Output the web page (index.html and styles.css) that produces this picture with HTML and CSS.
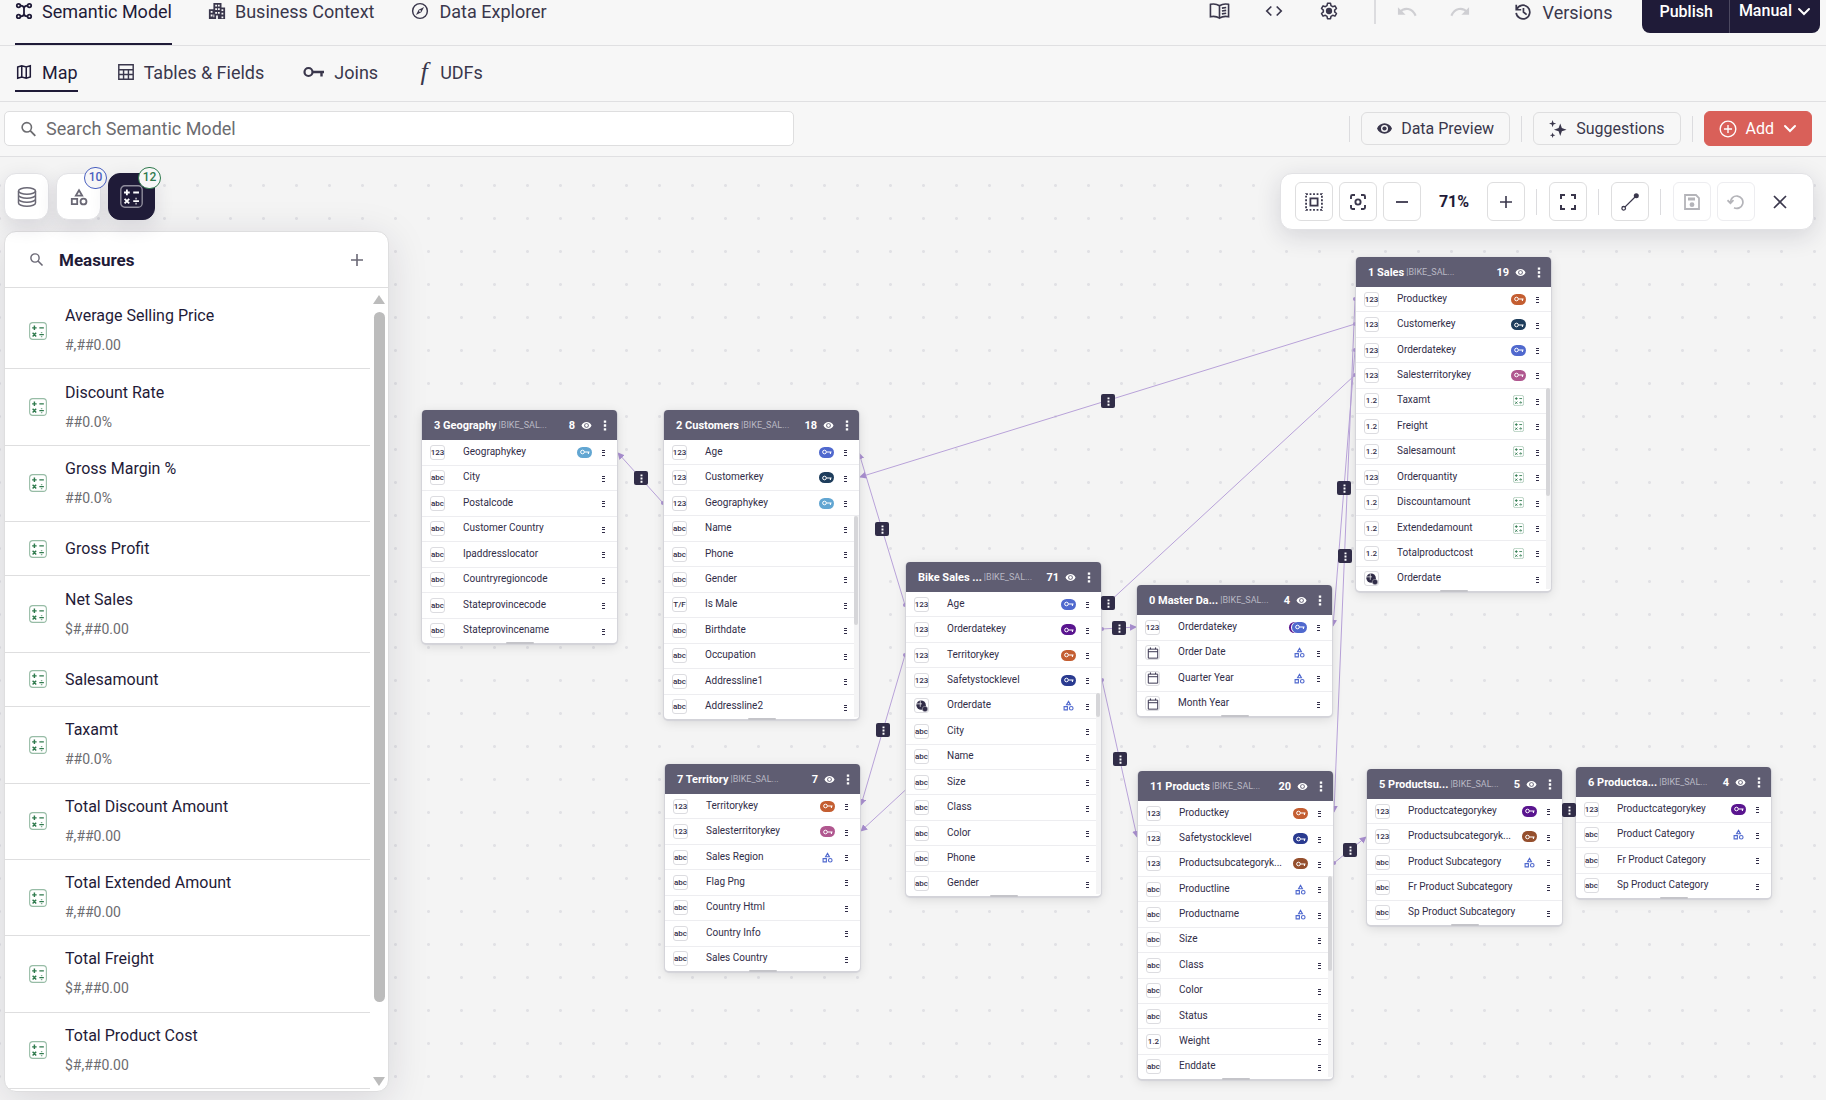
FILE: index.html
```html
<!DOCTYPE html>
<html lang="en">
<head>
    <meta charset="UTF-8">
    <meta name="viewport" content="width=device-width, initial-scale=1.0">
    <title>Semantic Model</title>
    <link rel="stylesheet" href="styles.css">
</head>
<body>
    <svg class="sprite" aria-hidden="true">
        <symbol id="i-model" viewBox="0 0 20 20"><g fill="none" stroke="currentColor" stroke-width="2"><circle cx="4" cy="4" r="2"/><circle cx="16" cy="4" r="2"/><circle cx="4" cy="16" r="2"/><circle cx="16" cy="16" r="2"/><path d="M6 4c2 0 4 1 4 3v6c0 2-2 3-4 3M14 4c-2 0-4 1-4 3M10 13c0 2 2 3 4 3"/></g></symbol>
        <symbol id="i-building" viewBox="0 0 20 20"><path fill="currentColor" fill-rule="evenodd" d="M6 1h9v5h4v13h-8v-4H9v4H1V8h5zM8 3v2h2V3zm3 0v2h2V3zM8 7v2h2V7zm3 0v2h2V7zM3 10v2h2v-2zm5 1v2h2v-2zm3 0v2h2v-2zm4-3v2h2V8zm0 4v2h2v-2zM3 14v2h2v-2zm12 2v2h2v-2zm-9-2v3h1v-3z"/></symbol>
        <symbol id="i-compass" viewBox="0 0 20 20"><circle cx="10" cy="10" r="8.2" fill="none" stroke="currentColor" stroke-width="1.6"/><path fill="currentColor" fill-rule="evenodd" d="M14.5 5.5l-3 6-6 3 3-6zM10 9a1 1 0 100 2 1 1 0 000-2z"/></symbol>
        <symbol id="i-map" viewBox="0 0 20 20"><path fill="none" stroke="currentColor" stroke-width="1.7" d="M3 4.5L7.5 3l5 1.500L17 3v12.500L12.500 17l-5-1.500L3 17zM7.500 3v12.500M12.500 4.500V17"/></symbol>
        <symbol id="i-table" viewBox="0 0 20 20"><path fill="none" stroke="currentColor" stroke-width="1.6" d="M2 2h16v16H2zM2 7.500h16M2 12.700h16M7.300 7.500V18M12.700 7.500V18"/></symbol>
        <symbol id="i-key" viewBox="0 0 22 12"><circle cx="5.500" cy="6" r="4" fill="none" stroke="currentColor" stroke-width="2.200"/><path fill="none" stroke="currentColor" stroke-width="2.400" d="M9.500 6H21M18.500 6v4.500"/></symbol>
        <symbol id="i-book" viewBox="0 0 22 18"><path fill="none" stroke="currentColor" stroke-width="1.700" d="M11 3.500C8 1.500 5 1.200 1.500 2v13c3.500-.8 6.500-.5 9.500 1.500 3-2 6-2.300 9.500-1.500V2C17 1.200 14 1.500 11 3.500zM11 3.500v13M13.500 6l4.500-.7M13.500 9l4.500-.7M13.500 12l4.500-.7"/></symbol>
        <symbol id="i-code" viewBox="0 0 20 14"><path fill="none" stroke="currentColor" stroke-width="1.900" d="M7 2L2 7l5 5M13 2l5 5-5 5"/></symbol>
        <symbol id="i-gear" viewBox="0 0 20 20"><path fill="none" stroke="currentColor" stroke-width="1.700" stroke-linejoin="round" d="M8.300 1.500h3.400l.5 2.600 1.900 1.100 2.500-.9 1.700 2.900-2 1.800v2l2 1.800-1.700 2.900-2.500-.9-1.900 1.100-.5 2.600H8.300l-.5-2.600-1.900-1.100-2.500.9-1.700-2.900 2-1.800V9l-2-1.800 1.700-2.900 2.500.9 1.900-1.100z"/><circle cx="10" cy="10" r="3.500" fill="currentColor"/></symbol>
        <symbol id="i-undo" viewBox="0 0 22 14"><path fill="none" stroke="currentColor" stroke-width="2.200" d="M2.500 8.500C8 2.500 16 4 19.500 12"/><path fill="currentColor" d="M1 3v8h8z"/></symbol>
        <symbol id="i-redo" viewBox="0 0 22 14"><path fill="none" stroke="currentColor" stroke-width="2.200" d="M19.500 8.500C14 2.500 6 4 2.500 12"/><path fill="currentColor" d="M21 3v8h-8z"/></symbol>
        <symbol id="i-history" viewBox="0 0 20 20"><path fill="none" stroke="currentColor" stroke-width="1.900" d="M3 7a7.600 7.600 0 11-.6 4M2.500 2v5.500H8M10.500 5.500V10l3.500 3"/></symbol>
        <symbol id="i-chevron" viewBox="0 0 14 10"><path fill="none" stroke="currentColor" stroke-width="2" stroke-linecap="round" d="M2 2l5 5 5-5"/></symbol>
        <symbol id="i-search" viewBox="0 0 20 20"><circle cx="8" cy="8" r="5.500" fill="none" stroke="currentColor" stroke-width="1.900"/><path stroke="currentColor" stroke-width="2.200" d="M12 12l6 6"/></symbol>
        <symbol id="i-eye" viewBox="0 0 20 14"><path fill="currentColor" fill-rule="evenodd" d="M10 0c4.500 0 8.300 2.800 10 7-1.700 4.200-5.500 7-10 7S1.700 11.200 0 7c1.700-4.200 5.500-7 10-7zm0 2.300a4.700 4.700 0 100 9.400 4.700 4.700 0 000-9.400z"/><circle cx="10" cy="7" r="2.800" fill="currentColor"/></symbol>
        <symbol id="i-spark" viewBox="0 0 20 20"><path fill="currentColor" d="M12.500 4l1.800 5 5.200 1.800-5.200 1.800-1.800 5.200-1.800-5.200-5.200-1.800L10.700 9zM4 0l1 3 3 1-3 1-1 3-1-3-3-1 3-1zM4 14l.8 2.200L7 17l-2.200.8L4 20l-.8-2.200L1 17l2.200-.8z"/></symbol>
        <symbol id="i-plus-circle" viewBox="0 0 20 20"><g fill="none" stroke="currentColor" stroke-width="1.500"><circle cx="10" cy="10" r="8.700"/><path d="M10 5.500v9M5.500 10h9"/></g></symbol>
        <symbol id="i-db" viewBox="0 0 20 20"><g fill="none" stroke="currentColor" stroke-width="1.500"><ellipse cx="10" cy="4" rx="8.500" ry="3.200"/><path d="M1.500 4v12c0 1.800 3.800 3.200 8.500 3.200s8.500-1.400 8.500-3.200V4M1.500 8c0 1.800 3.800 3.200 8.500 3.200s8.500-1.400 8.500-3.200M1.500 12c0 1.800 3.800 3.200 8.500 3.200s8.500-1.400 8.500-3.200"/></g></symbol>
        <symbol id="i-shapes" viewBox="0 0 20 20"><path fill="none" stroke="currentColor" stroke-width="2" d="M10 2.500l3.500 6h-7zM2 12h6v6H2z"/><circle cx="15" cy="15" r="3.300" fill="none" stroke="currentColor" stroke-width="2"/></symbol>
        <symbol id="i-calc" viewBox="0 0 20 20"><rect x=".7" y=".7" width="18.600" height="18.600" rx="3.500" fill="none" stroke="currentColor" stroke-width="1.200" opacity=".5"/><path fill="none" stroke="currentColor" stroke-width="1.600" d="M3.500 6.500h5M6 4v5M11.500 6.500h5M4 12l4 4M8 12l-4 4M11.500 14h5"/><path fill="currentColor" opacity=".6" d="M13.200 11h1.600v1.500h-1.600zM13.200 15.500h1.600V17h-1.600z"/></symbol>
        <symbol id="i-plus" viewBox="0 0 14 14"><path stroke="currentColor" stroke-width="1.600" d="M7 1v12M1 7h12"/></symbol>
        <symbol id="i-minus" viewBox="0 0 14 14"><path stroke="currentColor" stroke-width="1.800" d="M1 7h12"/></symbol>
        <symbol id="i-select" viewBox="0 0 20 20"><rect x="1.200" y="1.200" width="17.600" height="17.600" fill="none" stroke="currentColor" stroke-width="2" stroke-dasharray="2 1.910"/><rect x="6" y="6" width="8" height="8" fill="none" stroke="currentColor" stroke-width="2"/></symbol>
        <symbol id="i-focus" viewBox="0 0 18 18"><path fill="none" stroke="currentColor" stroke-width="1.900" d="M2 6V3.500Q2 2 3.500 2H6M12 2h2.500Q16 2 16 3.500V6M16 12v2.500q0 1.500-1.500 1.500H12M6 16H3.500Q2 16 2 14.500V12"/><circle cx="9" cy="9" r="2.600" fill="none" stroke="currentColor" stroke-width="1.900"/></symbol>
        <symbol id="i-full" viewBox="0 0 18 18"><path fill="none" stroke="currentColor" stroke-width="2" d="M2 6V2h4M12 2h4v4M16 12v4h-4M6 16H2v-4"/></symbol>
        <symbol id="i-line" viewBox="0 0 20 20"><path stroke="currentColor" stroke-width="1.400" d="M4 16L17 3"/><circle cx="17" cy="3" r="2.800" fill="currentColor"/><circle cx="3" cy="17" r="2" fill="#fff" stroke="currentColor" stroke-width="1.400"/></symbol>
        <symbol id="i-save" viewBox="0 0 18 18"><path fill="none" stroke="currentColor" stroke-width="1.800" d="M2 2h11l3 3v11H2z"/><path fill="currentColor" d="M5 4.500h7v3H5z"/><circle cx="9" cy="11.700" r="2.400" fill="currentColor"/></symbol>
        <symbol id="i-reset" viewBox="0 0 18 18"><path fill="none" stroke="currentColor" stroke-width="1.700" d="M3.500 9.500a6.200 6.200 0 113.500 5.300M.5 7.200l3 3 3-3"/></symbol>
        <symbol id="i-close" viewBox="0 0 14 14"><path stroke="currentColor" stroke-width="1.700" d="M1 1l12 12M13 1L1 13"/></symbol>
        <symbol id="i-kebab" viewBox="0 0 4 12"><path fill="currentColor" d="M.7.500h2.600v2.600H.7zM.7 4.700h2.600v2.600H.7zM.7 8.900h2.600v2.600H.7z"/></symbol>
        <symbol id="i-dots" viewBox="0 0 3 6"><path fill="currentColor" shape-rendering="crispEdges" d="M0 0h3v1H0zM0 2h3v1H0zM0 5h3v1H0z"/></symbol>
        <symbol id="i-calendar" viewBox="0 0 14 14"><path fill="none" stroke="currentColor" stroke-width="1.100" d="M1.500 2.500h11v10.500h-11zM1.500 5.500h11M4 .5v2M10 .5v2"/></symbol>
        <symbol id="i-globe" viewBox="0 0 14 14"><circle cx="6" cy="6" r="5.500" fill="currentColor"/><path stroke="#fff" fill="none" stroke-width=".8" d="M1 4.500h6M5 1v7"/><circle cx="10.500" cy="10.500" r="3.200" fill="currentColor" stroke="#fff" stroke-width=".4"/></symbol>
    </svg>

    <header class="topbar">
        <nav class="tabs">
            <a href="#model" class="tab active"><svg><use href="#i-model"/></svg>Semantic Model</a>
            <a href="#context" class="tab"><svg><use href="#i-building"/></svg>Business Context</a>
            <a href="#explorer" class="tab"><svg class="wide"><use href="#i-compass"/></svg>Data Explorer</a>
        </nav>
        <div class="top-actions">
            <button class="icon-btn" aria-label="Docs"><svg class="wide"><use href="#i-book"/></svg></button>
            <button class="icon-btn" aria-label="Code"><svg><use href="#i-code"/></svg></button>
            <button class="icon-btn" aria-label="Settings"><svg><use href="#i-gear"/></svg></button>
            <span class="divider"></span>
            <button class="icon-btn" aria-label="Undo" disabled><svg class="wide"><use href="#i-undo"/></svg></button>
            <button class="icon-btn" aria-label="Redo" disabled><svg class="wide"><use href="#i-redo"/></svg></button>
            <button class="versions"><svg><use href="#i-history"/></svg>Versions</button>
            <div class="publish">
                <button>Publish</button>
                <button class="mode">Manual<svg><use href="#i-chevron"/></svg></button>
            </div>
        </div>
    </header>

    <nav class="subnav">
        <a href="#map" class="subtab active"><svg><use href="#i-map"/></svg>Map</a>
        <a href="#tables" class="subtab"><svg><use href="#i-table"/></svg>Tables &amp; Fields</a>
        <a href="#joins" class="subtab"><svg class="key"><use href="#i-key"/></svg>Joins</a>
        <a href="#udfs" class="subtab"><i class="fn">f</i>UDFs</a>
    </nav>

    <div class="searchbar">
        <label class="search">
            <svg><use href="#i-search"/></svg>
            <input type="text" placeholder="Search Semantic Model" aria-label="Search Semantic Model">
        </label>
        <div class="search-actions">
            <span class="divider"></span>
            <button class="outline"><svg class="eye"><use href="#i-eye"/></svg>Data Preview</button>
            <span class="divider"></span>
            <button class="outline"><svg><use href="#i-spark"/></svg>Suggestions</button>
            <span class="divider"></span>
            <button class="add"><svg><use href="#i-plus-circle"/></svg>Add<svg class="chev"><use href="#i-chevron"/></svg></button>
        </div>
    </div>

    <main class="canvas">
        <svg class="edges" id="edges">
            <defs>
                <marker id="arrow" viewBox="0 0 8 8" refX="7" refY="4" markerWidth="7" markerHeight="7" markerUnits="userSpaceOnUse" orient="auto"><path d="M0 0l8 4-8 4z"/></marker>
                <marker id="dot" viewBox="0 0 6 6" refX="3" refY="3" markerWidth="4" markerHeight="4" markerUnits="userSpaceOnUse"><circle cx="3" cy="3" r="3"/></marker>
            </defs>
        </svg>
        <div id="nodes"></div>

        <div class="side">
            <div class="side-tabs">
                <button class="side-tab" aria-label="Tables"><svg><use href="#i-db"/></svg></button>
                <button class="side-tab dims" aria-label="Dimensions"><svg><use href="#i-shapes"/></svg><span class="badge blue">10</span></button>
                <button class="side-tab active" aria-label="Measures"><svg><use href="#i-calc"/></svg><span class="badge green">12</span></button>
            </div>
            <section class="panel">
                <div class="panel-head">
                    <svg><use href="#i-search"/></svg>
                    <h2>Measures</h2>
                    <button aria-label="Add measure"><svg><use href="#i-plus"/></svg></button>
                </div>
                <div class="panel-body">
                    <ul class="measures" id="measures"></ul>
                    <div class="scroll"><span class="up"></span><span class="thumb"></span><span class="down"></span></div>
                </div>
            </section>
        </div>

        <div class="tools">
            <button aria-label="Select all"><svg><use href="#i-select"/></svg></button>
            <button aria-label="Center"><svg><use href="#i-focus"/></svg></button>
            <button aria-label="Zoom out"><svg class="small"><use href="#i-minus"/></svg></button>
            <span class="zoom">71%</span>
            <button aria-label="Zoom in"><svg class="small"><use href="#i-plus"/></svg></button>
            <span class="divider"></span>
            <button aria-label="Full screen"><svg><use href="#i-full"/></svg></button>
            <span class="divider"></span>
            <button aria-label="Line style"><svg><use href="#i-line"/></svg></button>
            <span class="divider"></span>
            <button aria-label="Save" disabled><svg><use href="#i-save"/></svg></button>
            <button aria-label="Reset" disabled><svg><use href="#i-reset"/></svg></button>
            <button class="plain" aria-label="Close"><svg class="small"><use href="#i-close"/></svg></button>
        </div>
    </main>

    <script src="script.js"></script>
</body>
</html>
```
FILE: styles.css
```css
* {
    box-sizing: border-box;
}

body {
    margin: 0;
    height: 100vh;
    display: flex;
    flex-direction: column;
    overflow: hidden;
    background-color: #f7f7f7;
    color: #3a374c;
    font-family: Roboto, "Liberation Sans", sans-serif;
    font-size: 18px;
}

button {
    font: inherit;
    color: inherit;
    background: none;
    border: none;
    padding: 0;
    cursor: pointer;
}

a {
    color: inherit;
    text-decoration: none;
}

svg {
    width: 18px;
    height: 18px;
    flex: none;
}

.sprite {
    display: none;
}

.divider {
    width: 1px;
    height: 26px;
    background-color: #dcdcdf;
}

/* top bar */
.topbar {
    display: flex;
    justify-content: space-between;
    height: 46px;
    padding: 0 6px 0 15px;
    border-bottom: 1px solid #e0e0e2;
}

.tabs {
    display: flex;
    gap: 36px;
}

.tab {
    display: flex;
    align-items: flex-start;
    gap: 9px;
    line-height: 24px;
    height: 45px;
}

.tab svg {
    margin-top: 2px;
}

.tab svg.wide {
    width: 20px;
}

.tab.active,
.subtab.active {
    color: #1f1b38;
    border-bottom: 2px solid #1f1b38;
}

.top-actions {
    display: flex;
    align-items: flex-start;
    height: 33px;
}

.icon-btn {
    display: flex;
    align-items: center;
    justify-content: center;
    width: 55px;
    height: 22px;
}

.icon-btn:disabled {
    color: #cfcfd3;
    width: 52px;
}

.icon-btn svg.wide {
    width: 21px;
}

.top-actions .divider {
    height: 24px;
    width: 2px;
    margin: 0 6px 0 17px;
}

.versions {
    display: flex;
    align-items: center;
    gap: 11px;
    height: 24px;
    margin: 0 30px 0 28px;
}

.publish {
    display: flex;
    height: 33px;
    background-color: #1f1b38;
    border-radius: 0 0 8px 8px;
    color: #fff;
    font-size: 16px;
    font-weight: 500;
    line-height: 24px;
}

.publish button {
    display: flex;
    padding: 0 16px 0 17px;
}

.publish .mode {
    gap: 5px;
    padding: 0 9px;
    border-left: 1px solid #4b4860;
    line-height: 22px;
}

.mode svg {
    width: 14px;
    height: 24px;
}

/* sub navigation */
.subnav {
    display: flex;
    gap: 39px;
    height: 56px;
    padding: 8px 15px 9px;
    border-bottom: 1px solid #e0e0e2;
}

.subtab {
    display: flex;
    align-items: center;
    gap: 9px;
    height: 38px;
    border-bottom: 2px solid transparent;
}

.subtab .key {
    width: 22px;
    height: 12px;
}

.fn {
    font-family: "Liberation Serif", serif;
    font-size: 26px;
    line-height: 26px;
    width: 14px;
    text-align: center;
}

/* search row */
.searchbar {
    display: flex;
    align-items: center;
    justify-content: space-between;
    height: 55px;
    padding: 0 14px 1px 4px;
    border-bottom: 1px solid #e0e0e2;
}

.search {
    display: flex;
    align-items: center;
    gap: 9px;
    flex: 0 0 790px;
    height: 35px;
    padding: 0 15px;
    background-color: #fff;
    border: 1px solid #dededf;
    border-radius: 5px;
    color: #6c6c70;
}

.search svg {
    width: 17px;
}

.search input {
    flex: 1;
    font: inherit;
    color: inherit;
    border: none;
    outline: none;
    padding: 0;
    background: none;
}

.search input::placeholder {
    color: #6c6c70;
    opacity: 1;
}

.search-actions {
    display: flex;
    align-items: center;
    gap: 11px;
    font-size: 16px;
}

.outline,
.add {
    display: flex;
    align-items: center;
    gap: 9px;
    height: 33px;
    padding: 0 15px;
    border: 1px solid #dededf;
    border-radius: 6px;
}

.outline .eye {
    width: 15px;
    height: 11px;
}

.add {
    height: 35px;
    padding: 0 14px;
    background-color: #d96059;
    border-color: #d96059;
    color: #fff;
}

.add .chev {
    width: 14px;
    height: 10px;
}

/* canvas */
.canvas {
    position: relative;
    flex: 1;
    min-height: 0;
    background-color: #f4f4f4;
    background-image: radial-gradient(circle, #e1e1e5 1px, transparent 2px);
    background-size: 33px 33px;
    background-position: 16px 12px;
}

.edges {
    position: absolute;
    width: 100%;
    height: 100%;
}

.edges line {
    stroke: #b8a2d9;
    stroke-width: 1;
}

.edges marker {
    fill: #a98fd0;
}

.joint {
    position: absolute;
    display: flex;
    align-items: center;
    justify-content: center;
    width: 14px;
    height: 14px;
    margin: -7px;
    background-color: #312d48;
    border-radius: 2px;
    color: #fff;
}

.joint svg {
    width: 3px;
    height: 9px;
}

/* table nodes */
.node {
    position: absolute;
    display: flex;
    flex-direction: column;
    width: 195px;
    background-color: #fff;
    border-radius: 4px;
    box-shadow: 0 1px 1px 1px #d3d3d9, 0 3px 12px rgba(0, 0, 0, 0.12);
}

.node-head {
    display: flex;
    align-items: center;
    flex: none;
    height: 30px;
    padding: 0 10px 0 12px;
    background-color: #5f5d72;
    border-radius: 4px 4px 0 0;
    color: #fff;
    font-size: 11px;
}

.node-head h3 {
    margin: 0;
    font-size: 11px;
}

.node-head .source {
    flex: 1;
    margin-left: 2px;
    color: #b9b8c4;
    font-size: 9px;
}

.node-head .count {
    font-weight: 700;
}

.node-head .eye {
    width: 11px;
    height: 7px;
    margin: 0 11px 0 6px;
}

.node-head button,
.field button {
    display: flex;
}

.node-head button svg {
    width: 4px;
    height: 11px;
}

.fields {
    display: flex;
    flex-direction: column;
    flex: 1;
    margin: 0;
    padding: 0;
    list-style: none;
}

.field {
    display: flex;
    flex: 1;
    align-items: center;
    padding: 0 12px 0 8px;
    border-bottom: 1px solid #ededf0;
    color: #312d48;
    font-size: 10px;
}

.field:last-child {
    border-bottom: none;
}

.type {
    display: flex;
    align-items: center;
    justify-content: center;
    width: 15px;
    height: 15px;
    margin-right: 18px;
    border: 1px solid #dcdce0;
    border-radius: 3px;
    font-size: 8px;
    font-weight: 500;
}

.type svg {
    width: 12px;
    height: 12px;
}

.name {
    flex: 1;
    padding-bottom: 2px;
    white-space: nowrap;
}

.pill {
    display: flex;
    align-items: center;
    justify-content: center;
    width: 15px;
    height: 11px;
    margin-right: 10px;
    border-radius: 6px;
    color: #fff;
}

.pill svg {
    width: 10px;
    height: 6px;
}

.sky { background-color: #62a6d2; }
.blue-key { background-color: #5069ce; }
.teal { background-color: #1e3d5c; }
.orange { background-color: #c45e31; }
.pink { background-color: #b0578f; }
.purple { background-color: #5a158f; }
.navy { background-color: #2a3b90; }
.brown { background-color: #954f2d; }

.double {
    box-shadow: -1px 0 0 #fff, -3px 0 0 #5a158f;
}

.mark {
    width: 11px;
    height: 11px;
    margin-right: 12px;
}

.mark.dim { color: #5069ce; }
.mark.calc { color: #2f7a4d; }

.field button svg {
    width: 3px;
    height: 6px;
    margin-top: 2px;
}

.track {
    position: absolute;
    right: 0;
    bottom: 2px;
    width: 5px;
    background-color: #f4f4f5;
}

.track span {
    display: block;
    width: 4px;
    background-color: #d6d6d9;
    border-radius: 2px;
}

.handle {
    position: absolute;
    left: 50%;
    bottom: -1px;
    width: 28px;
    height: 2px;
    margin-left: -14px;
    background-color: #c4c4c9;
    border-radius: 1px;
}

/* left side */
.side {
    position: absolute;
    top: 16px;
    bottom: 8px;
    left: 4px;
    width: 385px;
    display: flex;
    flex-direction: column;
    gap: 11px;
}

.side-tabs {
    display: flex;
    gap: 7px;
}

.side-tab {
    position: relative;
    display: flex;
    align-items: center;
    justify-content: center;
    width: 45px;
    height: 47px;
    background-color: #fff;
    border: 1px solid #e2e2e5;
    border-radius: 12px;
    box-shadow: 0 6px 20px rgba(30, 27, 56, 0.12);
    color: #6a6875;
}

.side-tab svg {
    width: 20px;
    height: 22px;
}

.side-tab.dims svg {
    width: 18px;
    height: 18px;
}

.side-tab.active {
    width: 47px;
    background-color: #1f1b38;
    border-color: #1f1b38;
    color: #fff;
}

.side-tab.active svg {
    width: 23px;
    height: 23px;
}

.badge {
    position: absolute;
    top: -7px;
    right: -7px;
    width: 23px;
    height: 22px;
    background-color: #f7f7f7;
    border: 1px solid;
    border-radius: 11px;
    font-size: 12px;
    font-weight: 500;
    line-height: 19px;
}

.blue { color: #4a60c0; }
.green { color: #2f7a4d; }

.panel {
    display: flex;
    flex-direction: column;
    flex: 1;
    min-height: 0;
    background-color: #fff;
    border: 1px solid #dededf;
    border-radius: 12px;
    box-shadow: 0 8px 40px rgba(30, 27, 56, 0.13);
    overflow: hidden;
}

.panel-head {
    display: flex;
    align-items: center;
    flex: none;
    gap: 15px;
    height: 56px;
    padding: 0 24px;
    border-bottom: 1px solid #dededf;
    color: #6a6875;
}

.panel-head svg {
    width: 15px;
    height: 15px;
}

.panel-head h2 {
    flex: 1;
    margin: 0;
    color: #1f1b38;
    font-size: 17px;
    font-weight: 700;
}

.panel-head button {
    display: flex;
}

.panel-head button svg {
    width: 14px;
    height: 14px;
}

.panel-body {
    display: flex;
    flex: 1;
    min-height: 0;
}

.measures {
    display: flex;
    flex-direction: column;
    flex: 1;
    margin: 0;
    padding: 5px 0 2px;
    list-style: none;
}

.measure {
    display: flex;
    align-items: center;
    flex: 1 0 auto;
    gap: 18px;
    padding: 4px 0 4px 24px;
    border-bottom: 1px solid #dededf;
}

.measure svg {
    color: #2f7a4d;
}

.measure h4 {
    margin: 0;
    padding: 4px 0;
    color: #1f1b38;
    font-size: 16px;
    font-weight: 400;
    line-height: 29px;
}

.measure h4:only-child {
    padding: 8px 0;
}

.measure p {
    margin: 0 0 8px;
    color: #6c6c70;
    font-size: 14px;
    line-height: 22px;
}

.scroll {
    display: flex;
    flex-direction: column;
    align-items: center;
    gap: 8px;
    width: 18px;
    padding: 6px 0 5px;
}

.thumb {
    flex: 0 1 690px;
    width: 11px;
    background-color: #bcbcbc;
    border-radius: 6px;
}

.up,
.down {
    border: 6px solid transparent;
    border-bottom: 9px solid #bcbcbc;
    border-top: none;
    margin-top: 1px;
}

.down {
    border-top: 9px solid #bcbcbc;
    border-bottom: none;
    margin-top: auto;
}

/* canvas tools */
.tools {
    position: absolute;
    top: 16px;
    right: 12px;
    display: flex;
    align-items: center;
    gap: 6px;
    height: 57px;
    padding: 0 14px;
    background-color: #fff;
    border: 1px solid #e2e2e5;
    border-radius: 12px;
    box-shadow: 0 6px 24px rgba(30, 27, 56, 0.14);
}

.tools button {
    display: flex;
    align-items: center;
    justify-content: center;
    width: 38px;
    height: 39px;
    border: 1px solid #dededf;
    border-radius: 6px;
}

.tools button:disabled {
    color: #b4b4b9;
    border-color: #ededf0;
}

.tools .plain {
    border: none;
}

.tools .small {
    width: 14px;
    height: 14px;
}

.tools .divider {
    margin: 0 6px 0 5px;
}

.zoom {
    width: 54px;
    color: #1f1b38;
    font-size: 16px;
    font-weight: 700;
    text-align: center;
}
```
FILE: script.js
```js
const measures = [
    ['Average Selling Price', '#,##0.00'],
    ['Discount Rate', '##0.0%'],
    ['Gross Margin %', '##0.0%'],
    ['Gross Profit'],
    ['Net Sales', '$#,##0.00'],
    ['Salesamount'],
    ['Taxamt', '##0.0%'],
    ['Total Discount Amount', '#,##0.00'],
    ['Total Extended Amount', '#,##0.00'],
    ['Total Freight', '$#,##0.00'],
    ['Total Product Cost', '$#,##0.00']
];

// field: [type, name, mark]
const nodes = [
    { title: '3 Geography', count: 8, x: 422, y: 253, h: 233, fields: [
        ['123', 'Geographykey', 'sky'], ['abc', 'City'], ['abc', 'Postalcode'], ['abc', 'Customer Country'],
        ['abc', 'Ipaddresslocator'], ['abc', 'Countryregioncode'], ['abc', 'Stateprovincecode'], ['abc', 'Stateprovincename']
    ] },
    { title: '2 Customers', count: 18, x: 664, y: 253, h: 309, scroll: [106, 109], fields: [
        ['123', 'Age', 'blue-key'], ['123', 'Customerkey', 'teal'], ['123', 'Geographykey', 'sky'], ['abc', 'Name'],
        ['abc', 'Phone'], ['abc', 'Gender'], ['T/F', 'Is Male'], ['abc', 'Birthdate'], ['abc', 'Occupation'],
        ['abc', 'Addressline1'], ['abc', 'Addressline2']
    ] },
    { title: '7 Territory', count: 7, x: 665, y: 607, h: 207, fields: [
        ['123', 'Territorykey', 'orange'], ['123', 'Salesterritorykey', 'pink'], ['abc', 'Sales Region', 'dim'],
        ['abc', 'Flag Png'], ['abc', 'Country Html'], ['abc', 'Country Info'], ['abc', 'Sales Country']
    ] },
    { title: 'Bike Sales ...', count: 71, x: 906, y: 405, h: 334, scroll: [131, 24], fields: [
        ['123', 'Age', 'blue-key'], ['123', 'Orderdatekey', 'purple'], ['123', 'Territorykey', 'orange'],
        ['123', 'Safetystocklevel', 'navy'], ['globe', 'Orderdate', 'dim'], ['abc', 'City'], ['abc', 'Name'],
        ['abc', 'Size'], ['abc', 'Class'], ['abc', 'Color'], ['abc', 'Phone'], ['abc', 'Gender']
    ] },
    { title: '0 Master Da...', count: 4, x: 1137, y: 428, h: 131, fields: [
        ['123', 'Orderdatekey', 'blue-key double'], ['calendar', 'Order Date', 'dim'],
        ['calendar', 'Quarter Year', 'dim'], ['calendar', 'Month Year']
    ] },
    { title: '11 Products', count: 20, x: 1138, y: 614, h: 308, scroll: [105, 95], fields: [
        ['123', 'Productkey', 'orange'], ['123', 'Safetystocklevel', 'navy'], ['123', 'Productsubcategoryk...', 'brown'],
        ['abc', 'Productline', 'dim'], ['abc', 'Productname', 'dim'], ['abc', 'Size'], ['abc', 'Class'],
        ['abc', 'Color'], ['abc', 'Status'], ['1.2', 'Weight'], ['abc', 'Enddate']
    ] },
    { title: '1 Sales', count: 19, x: 1356, y: 100, h: 334, scroll: [131, 108], fields: [
        ['123', 'Productkey', 'orange'], ['123', 'Customerkey', 'teal'], ['123', 'Orderdatekey', 'blue-key'],
        ['123', 'Salesterritorykey', 'pink'], ['1.2', 'Taxamt', 'calc'], ['1.2', 'Freight', 'calc'],
        ['1.2', 'Salesamount', 'calc'], ['123', 'Orderquantity', 'calc'], ['1.2', 'Discountamount', 'calc'],
        ['1.2', 'Extendedamount', 'calc'], ['1.2', 'Totalproductcost', 'calc'], ['globe', 'Orderdate']
    ] },
    { title: '5 Productsu...', count: 5, x: 1367, y: 612, h: 156, fields: [
        ['123', 'Productcategorykey', 'purple'], ['123', 'Productsubcategoryk...', 'brown'],
        ['abc', 'Product Subcategory', 'dim'], ['abc', 'Fr Product Subcategory'], ['abc', 'Sp Product Subcategory']
    ] },
    { title: '6 Productca...', count: 4, x: 1576, y: 610, h: 131, fields: [
        ['123', 'Productcategorykey', 'purple'], ['abc', 'Product Category', 'dim'],
        ['abc', 'Fr Product Category'], ['abc', 'Sp Product Category']
    ] }
];

// join: [x1, y1, x2, y2], arrow at the second point
const joins = [
    [663, 346, 618, 296],
    [905, 448, 859, 296],
    [1355, 167, 860, 320],
    [1355, 218, 861, 674],
    [905, 498, 861, 648],
    [1102, 472, 1136, 470],
    [1102, 523, 1137, 680],
    [1355, 193, 1333, 469],
    [1355, 142, 1334, 655],
    [1334, 706, 1366, 680],
    [1562, 653, 1576, 653]
];

function icon(id, cls) {
    return `<svg class="${cls || ''}"><use href="#i-${id}"/></svg>`;
}

function renderMark(mark) {
    if (!mark) return '';
    if (mark === 'dim') return icon('shapes', 'mark dim');
    if (mark === 'calc') return icon('calc', 'mark calc');
    return `<span class="pill ${mark}">${icon('key')}</span>`;
}

function renderField([type, name, mark]) {
    const label = type === 'globe' || type === 'calendar' ? icon(type) : type;
    return `<li class="field">
        <span class="type">${label}</span>
        <span class="name">${name}</span>
        ${renderMark(mark)}
        <button aria-label="Field menu">${icon('dots')}</button>
    </li>`;
}

function renderNode(n) {
    const track = n.scroll
        ? `<div class="track" style="top:${n.scroll[0]}px"><span style="height:${n.scroll[1]}px"></span></div>`
        : '';
    return `<article class="node" style="left:${n.x}px;top:${n.y}px;height:${n.h}px">
        <div class="node-head">
            <h3>${n.title}</h3>
            <span class="source">|BIKE_SAL...</span>
            <span class="count">${n.count}</span>
            ${icon('eye', 'eye')}
            <button aria-label="Table menu">${icon('kebab')}</button>
        </div>
        <ul class="fields">${n.fields.map(renderField).join('')}</ul>
        ${track}
        <span class="handle"></span>
    </article>`;
}

function renderJoint([x1, y1, x2, y2]) {
    const x = Math.round((x1 + x2) / 2);
    const y = Math.round((y1 + y2) / 2);
    return `<button class="joint" aria-label="Join menu" style="left:${x}px;top:${y}px">${icon('kebab')}</button>`;
}

document.getElementById('measures').innerHTML = measures.map(([name, format]) => `
    <li class="measure">${icon('calc')}<div><h4>${name}</h4>${format ? `<p>${format}</p>` : ''}</div></li>
`).join('');

document.getElementById('edges').innerHTML += joins.map(([x1, y1, x2, y2]) =>
    `<line x1="${x1}" y1="${y1}" x2="${x2}" y2="${y2}" marker-start="url(#dot)" marker-end="url(#arrow)"/>`
).join('');

document.getElementById('nodes').innerHTML =
    nodes.map(renderNode).join('') + joins.map(renderJoint).join('');
```
